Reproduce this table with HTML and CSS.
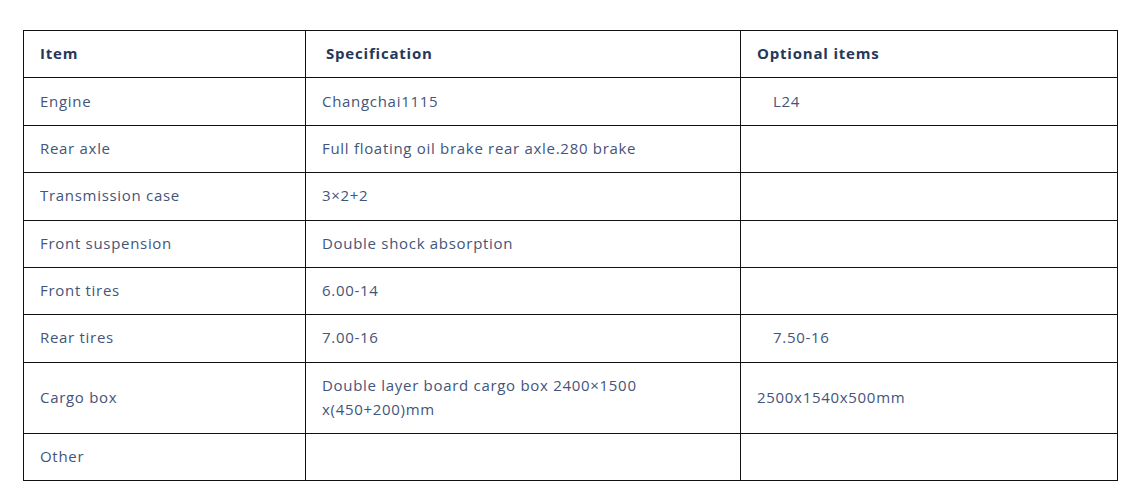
FILE: index.html
```html
<!DOCTYPE html>
<html lang="en">
<head>
<meta charset="utf-8">
<title>Specification</title>
<link rel="stylesheet" href="styles.css">
</head>
<body>
<div class="wrap">
  <table class="spec">
    <colgroup>
      <col class="c1">
      <col class="c2">
      <col class="c3">
    </colgroup>
    <thead>
      <tr>
        <th>Item</th>
        <th class="h2">Specification</th>
        <th>Optional items</th>
      </tr>
    </thead>
    <tbody>
      <tr><td>Engine</td><td>Changchai1115</td><td class="ind">L24</td></tr>
      <tr><td>Rear axle</td><td>Full floating oil brake rear axle.280 brake</td><td></td></tr>
      <tr><td>Transmission case</td><td>3×2+2</td><td></td></tr>
      <tr><td>Front suspension</td><td>Double shock absorption</td><td></td></tr>
      <tr><td>Front tires</td><td>6.00-14</td><td></td></tr>
      <tr><td>Rear tires</td><td>7.00-16</td><td class="ind">7.50-16</td></tr>
      <tr><td>Cargo box</td><td>Double layer board cargo box 2400×1500<br>x(450+200)mm</td><td>2500x1540x500mm</td></tr>
      <tr><td>Other</td><td></td><td></td></tr>
    </tbody>
  </table>
</div>
</body>
</html>
```
FILE: styles.css
```css
html, body {
  margin: 0;
  padding: 0;
  background: #ffffff;
}
.wrap {
  padding: 30px 0 0 23px;
}
.spec {
  border-collapse: collapse;
  width: 1094px;
  table-layout: fixed;
  font-family: "Open Sans", "Liberation Sans", sans-serif;
  font-size: 15px;
  line-height: 24px;
  letter-spacing: 0.7px;
  color: #43557a;
}
.c1 { width: 282px; }
.c2 { width: 435px; }
.c3 { width: 377px; }
.spec th,
.spec td {
  border: 1px solid #111111;
  padding: 10.2px 16px 12.2px 16px;
  text-align: left;
  vertical-align: middle;
}
.spec th {
  font-weight: 700;
  color: #253859;
  letter-spacing: 0.8px;
}
.spec th.h2 {
  padding-left: 20px;
}
.spec td.ind {
  padding-left: 32px;
}
```
